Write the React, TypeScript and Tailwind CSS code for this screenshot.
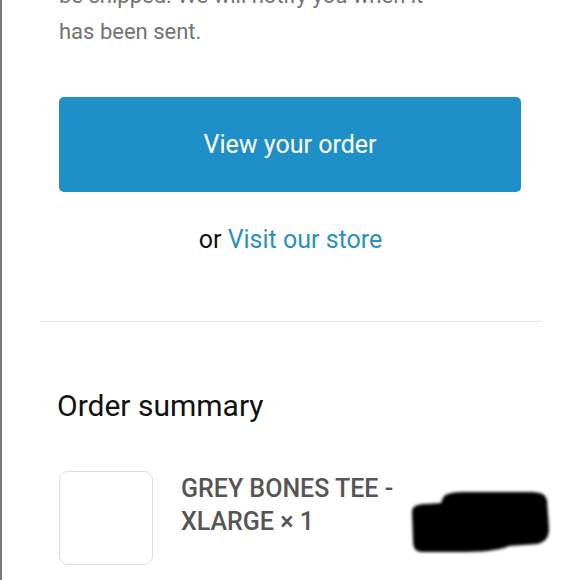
import React from "react";

const font = { fontFamily: "Roboto, 'Noto Sans', sans-serif" };

function Redaction() {
  return (
    <svg width="150" height="70" viewBox="0 0 150 70" className="shrink-0">
      <defs>
        <filter id="soft" x="-10%" y="-10%" width="120%" height="120%">
          <feGaussianBlur stdDeviation="1.6" />
        </filter>
      </defs>
      <path
        d="M34 10 C36 5 44 4 60 4 L120 4 C132 4 136 6 138 12 L140 40 C140 50 136 54 128 56 L100 58 C90 63 70 64 50 64 L14 64 C6 64 4 60 4 52 L3 24 C3 18 8 16 18 16 L32 15 Z"
        fill="#000"
        filter="url(#soft)"
      />
    </svg>
  );
}

export default function App() {
  return (
    <div
      className="relative h-[580px] w-[580px] overflow-hidden border-l-2 border-[#7a7a7a] bg-white"
      style={font}
    >
      <div className="pl-[38px] pr-[39px]">
        <div className="px-[19px]">
          <p className="mt-[-22px] text-[22px] leading-[36px] text-[#737373]">
            be shipped. We will notify you when it
            <br />
            has been sent.
          </p>

          <a className="mt-[47px] flex h-[95px] w-[462px] items-center justify-center rounded-[5px] bg-[#1f8fc7] text-[25px] text-white">
            View your order
          </a>

          <p className="mt-[31px] text-center text-[25px] leading-[34px] text-[#111]">
            or <a className="text-[#2b8fbf]">Visit our store</a>
          </p>
        </div>

        <div className="mt-[64px] h-px w-[501px] bg-[#e3e3e3]" />

        <div className="px-[19px]">
          <h2 className="mt-[66px] -ml-[2px] text-[30px] leading-[36px] text-[#111]">
            Order summary
          </h2>

          <div className="mt-[47px] flex items-start">
            <div className="h-[94px] w-[94px] shrink-0 rounded-[9px] border border-[#dcdcdc] bg-white" />
            <div className="ml-[28px] mt-[1px] w-[240px] text-[25px] font-medium leading-[33px] text-[#555]">
              GREY BONES TEE -
              <br />
              XLARGE × 1
            </div>
            <div className="ml-auto mr-[-37px] mt-[17px]">
              <Redaction />
            </div>
          </div>
        </div>
      </div>
    </div>
  );
}
